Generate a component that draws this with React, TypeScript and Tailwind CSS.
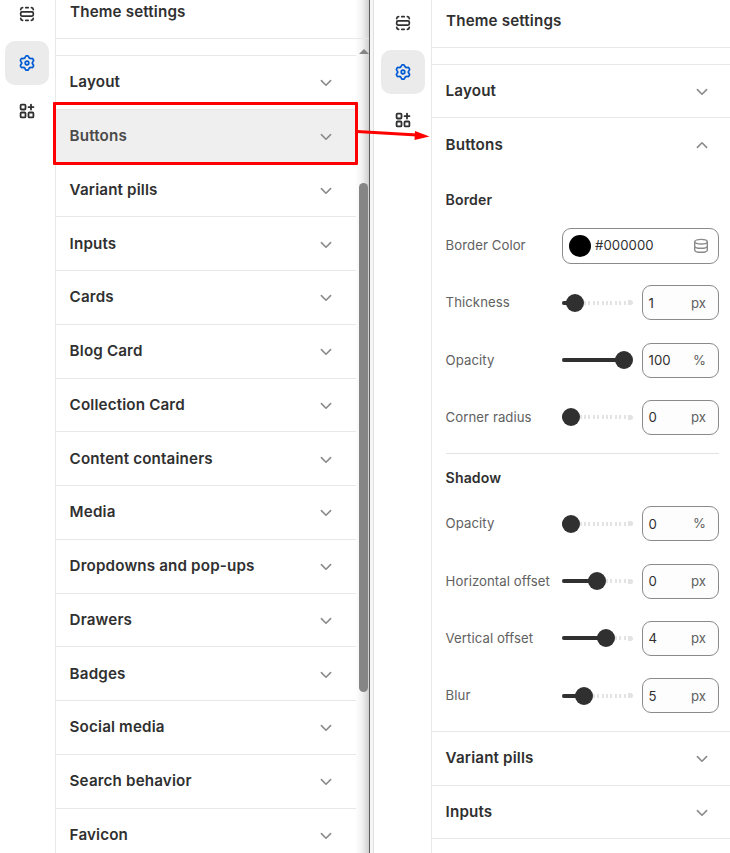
const leftItems = [
  "Layout",
  "Buttons",
  "Variant pills",
  "Inputs",
  "Cards",
  "Blog Card",
  "Collection Card",
  "Content containers",
  "Media",
  "Dropdowns and pop-ups",
  "Drawers",
  "Badges",
  "Social media",
  "Search behavior",
  "Favicon",
];

function SectionsIcon() {
  return (
    <svg width="16" height="16" viewBox="0 0 16 16" fill="none" stroke="#303030" strokeWidth="1.7" strokeLinecap="round">
      <rect x="1.7" y="5.9" width="12.6" height="4.2" rx="1.3" />
      <path d="M1.7 3.6c.1-1.1.8-1.8 1.9-1.9M6.8 1.7h2.4M12.4 1.7c1.1.1 1.8.8 1.9 1.9M1.7 12.4c.1 1.1.8 1.8 1.9 1.9M6.8 14.3h2.4M12.4 14.3c1.1-.1 1.8-.8 1.9-1.9" />
    </svg>
  );
}

function AppsIcon() {
  return (
    <svg width="16" height="16" viewBox="0 0 16 16" fill="none" stroke="#303030" strokeWidth="1.8" strokeLinecap="round">
      <rect x="1.6" y="1.6" width="4.9" height="4.9" rx="1" />
      <rect x="1.6" y="9.5" width="4.9" height="4.9" rx="1" />
      <rect x="9.5" y="9.5" width="4.9" height="4.9" rx="1" />
      <path d="M12 1.6v4.9M9.5 4.05h5" />
    </svg>
  );
}

function GearIcon() {
  return (
    <svg width="18" height="18" viewBox="-9 -9 18 18" fill="none" stroke="#005bd3" strokeWidth="1.7" strokeLinecap="round">
      {[0, 60, 120, 180, 240, 300].map((angle) => (
        <path
          key={angle}
          transform={`rotate(${angle})`}
          d="M-2.7-4.68C-2.1-5.03-1.9-5.2-1.7-5.9L-1.6-6.2Q-1.4-7.1-.6-7.1H.6Q1.4-7.1 1.6-6.2L1.7-5.9C1.9-5.2 2.1-5.03 2.7-4.68"
        />
      ))}
      <circle r="1.8" />
    </svg>
  );
}

function Chevron({ up = false }: { up?: boolean }) {
  return (
    <svg
      width="12"
      height="8"
      viewBox="0 0 12 8"
      fill="none"
      stroke="#8a8a8a"
      strokeWidth="1.6"
      strokeLinecap="round"
      strokeLinejoin="round"
      className={up ? "rotate-180" : "translate-y-px"}
    >
      <path d="M1.4 1.6 6 6.2l4.6-4.6" />
    </svg>
  );
}

function Rail() {
  return (
    <>
      <div className="flex h-11 w-11 items-center justify-center">
        <SectionsIcon />
      </div>
      <div className="mt-[5px] flex h-11 w-11 items-center justify-center rounded-[10px] bg-[#ebebeb]">
        <GearIcon />
      </div>
      <div className="mt-1 flex h-11 w-11 items-center justify-center">
        <AppsIcon />
      </div>
    </>
  );
}

function Row({
  label,
  active = false,
  up = false,
  wide = false,
}: {
  label: string;
  active?: boolean;
  up?: boolean;
  wide?: boolean;
}) {
  return (
    <div
      className={`flex h-[53.75px] shrink-0 items-center justify-between pl-[13.6px] ${
        active ? "bg-[#efefef] text-[#4a4a4a]" : "text-[#303030]"
      } ${up ? "" : "border-b border-[#e8e8e8]"}`}
    >
      <span>{label}</span>
      <span className={wide ? "mr-[22px]" : "mr-[24px]"}>
        <Chevron up={up} />
      </span>
    </div>
  );
}

function Slider({ value }: { value: number }) {
  return (
    <div className="relative flex h-[18px] w-[71px] shrink-0 items-center">
      <div className="flex w-full items-center justify-end">
        <div className="h-[4px] w-[66px] bg-[repeating-linear-gradient(to_left,transparent_0px,transparent_2.4px,#e3e3e3_2.4px,#e3e3e3_4.4px)]" />
        <div className="h-[5px] w-[5px] shrink-0 rounded-r-full rounded-l-[1px] bg-[#e3e3e3]" />
      </div>
      <div className="absolute left-0 h-1 rounded-full bg-[#303030]" style={{ width: value + 9 }} />
      <div className="absolute h-[18px] w-[18px] rounded-full bg-[#303030]" style={{ left: value }} />
    </div>
  );
}

function Field({ label, slider, value, unit }: { label: string; slider: number; value: string; unit: string }) {
  return (
    <div className="flex h-[57.3px] shrink-0 items-center">
      <span className="w-[116.4px] pb-px whitespace-nowrap text-[#616161]">{label}</span>
      <Slider value={slider} />
      <div className="ml-[9px] flex h-[35px] w-[77px] items-center justify-between rounded-[9px] border border-[#8a8a8a] bg-[#fdfdfd] pr-[12px] pl-[5.5px]">
        <span className="text-[#303030]">{value}</span>
        <span className={unit === "%" ? "pb-px text-[#616161]" : "text-[#616161]"}>{unit}</span>
      </div>
    </div>
  );
}

export default function App() {
  return (
    <div className="relative flex h-[853px] w-[730px] overflow-hidden bg-white font-['Inter',sans-serif] text-[15.2px] leading-5 font-semibold tracking-[0.15px] text-[#303030] [font-variation-settings:'opsz'_14]">
      <aside className="flex w-14 shrink-0 flex-col items-center border-r border-[#e8e8e8] pr-px">
        <div className="-mt-2 flex flex-col">
          <Rail />
        </div>
      </aside>

      <section className="flex w-[313px] shrink-0 flex-col bg-linear-to-r from-white from-[299px] via-[#f2f2f2] via-[306px] to-[#cfcfcf]">
        <header className="flex h-[39px] shrink-0 items-start border-b border-[#e8e8e8] pt-[2px] pl-[14px]">Theme settings</header>
        <div className="flex min-h-0 flex-1">
          <div className="flex w-[300px] flex-col overflow-hidden pt-4">
            <div className="h-px shrink-0 bg-[#e8e8e8]" />
            {leftItems.map((item) => (
              <Row key={item} label={item} active={item === "Buttons"} />
            ))}
          </div>
          <div className="flex w-[13px] flex-col items-center pt-[10px]">
            <svg width="10" height="5" viewBox="0 0 10 5" className="ml-[2px] shrink-0">
              <path d="M5 0 10 5H0Z" fill="#858585" />
            </svg>
            <div className="mt-[129px] ml-[2px] h-[509px] w-[9px] shrink-0 rounded-full bg-[#858585]" />
          </div>
        </div>
      </section>

      <div className="w-[5px] shrink-0 border-r border-l border-r-[#dfdfdf] border-l-[#5e5e5e] bg-[#f6f6f6]" />

      <aside className="flex w-[58px] shrink-0 flex-col items-center border-r border-[#e8e8e8] pt-px">
        <Rail />
      </aside>

      <section className="flex w-[298px] shrink-0 flex-col">
        <header className="flex h-12 shrink-0 items-start border-b border-[#e8e8e8] pt-[11px] pl-[14px]">Theme settings</header>
        <div className="mt-4 border-t border-[#e8e8e8]">
          <div className="-mt-[0.6px]">
            <Row label="Layout" wide />
            <Row label="Buttons" up wide />
          </div>
        </div>
        <div className="flex h-[560px] shrink-0 flex-col border-b border-[#e8e8e8] pr-[11px] pl-[13.6px] text-[13.2px] font-normal tracking-[0.06px]">
          <h3 className="mt-[18px] text-[14.1px] font-semibold tracking-[0.12px]">Border</h3>
          <div className="mt-[7px] flex h-[57.3px] shrink-0 items-center">
            <span className="w-[116.4px] pb-px text-[#616161]">Border Color</span>
            <div className="flex h-9 w-[157px] items-center rounded-[9px] border border-[#8a8a8a] pr-[9px] pl-[6px]">
              <span className="h-[22px] w-[22px] rounded-full bg-black" />
              <span className="ml-[4px] pb-px text-[#303030]">#000000</span>
              <svg width="16" height="16" viewBox="0 0 16 16" fill="none" stroke="#8a8a8a" strokeWidth="1.4" className="ml-auto">
                <ellipse cx="8" cy="3.7" rx="6.3" ry="2.3" />
                <path d="M1.7 3.7v8.2c0 1.3 2.8 2.4 6.3 2.4s6.3-1.1 6.3-2.4V3.7M1.7 7.9c0 1.3 2.8 2.4 6.3 2.4s6.3-1.1 6.3-2.4" />
              </svg>
            </div>
          </div>
          <Field label="Thickness" slider={4} value="1" unit="px" />
          <Field label="Opacity" slider={53} value="100" unit="%" />
          <Field label="Corner radius" slider={0} value="0" unit="px" />
          <div className="mt-[7px] h-px shrink-0 bg-[#e3e3e3]" />
          <h3 className="mt-[14px] text-[14.1px] font-semibold tracking-[0.12px]">Shadow</h3>
          <div className="mt-[7px]">
            <Field label="Opacity" slider={0} value="0" unit="%" />
            <Field label="Horizontal offset" slider={26} value="0" unit="px" />
            <Field label="Vertical offset" slider={35} value="4" unit="px" />
            <Field label="Blur" slider={13} value="5" unit="px" />
          </div>
        </div>
        <Row label="Variant pills" wide />
        <Row label="Inputs" wide />
      </section>

      <div className="absolute top-[102px] left-[53px] h-[63px] w-[305px] rounded-[1px] border-3 border-[#ff0000]" />
      <svg width="76" height="20" viewBox="0 0 76 20" className="absolute top-[124px] left-[355px]">
        <path d="M2 7.5 62 11" stroke="#ff0000" strokeWidth="3" />
        <path d="M60 7 74.5 12.5 59.5 16Z" fill="#ff0000" />
      </svg>
    </div>
  );
}
